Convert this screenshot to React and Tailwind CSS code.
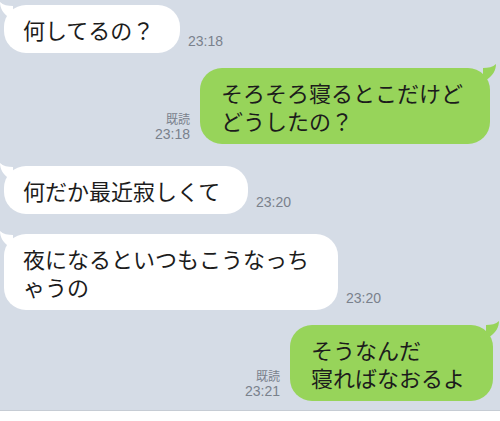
import React from 'react';

const jp = { fontFamily: '"Noto Sans CJK JP", "Noto Sans", sans-serif' };
const num = { fontFamily: '"Liberation Sans", Arial, sans-serif' };

const LeftTail = () => (
  <svg className="absolute -left-[5px] -top-[3px]" width="14" height="20" viewBox="0 0 14 20">
    <path d="M14 4 C9 4 4 3 1 0 C1 6 4 12 12 17 L14 17 Z" fill="#ffffff" />
  </svg>
);

const RightTail = () => (
  <svg className="absolute -right-[7px] -top-[4px]" width="14" height="20" viewBox="0 0 14 20">
    <path d="M0 4 C5 4 10 3 13 0 C13 6 10 12 2 17 L0 17 Z" fill="#97d45a" />
  </svg>
);

const Incoming = ({ lines, time, width, mt }) => (
  <div className={`flex items-end pl-[4px] ${mt}`}>
    <div
      className={`relative bg-white rounded-[22px] pl-[19px] pr-[19px] py-[10px] text-[22px] leading-[28px] text-[#1c1c1c] ${width}`}
      style={jp}
    >
      <LeftTail />
      {lines.map((l, i) => (
        <div key={i} className="whitespace-nowrap">{l}</div>
      ))}
    </div>
    <span className="ml-[8px] mb-[4px] text-[14px] leading-[16px] text-[#7a818c]" style={num}>
      {time}
    </span>
  </div>
);

const Outgoing = ({ lines, time, width, mt, pr }) => (
  <div className={`flex items-end justify-end ${pr} ${mt}`}>
    <div className="mr-[10px] mb-[2px] flex flex-col items-end text-[#7a818c]">
      <span className="text-[12px] leading-[15px]" style={jp}>既読</span>
      <span className="text-[14px] leading-[16px]" style={num}>{time}</span>
    </div>
    <div
      className={`relative bg-[#97d45a] rounded-[22px] pl-[21px] pr-[19px] py-[10px] text-[22px] leading-[28px] text-[#1c1c1c] ${width}`}
      style={jp}
    >
      <RightTail />
      {lines.map((l, i) => (
        <div key={i} className="whitespace-nowrap">{l}</div>
      ))}
    </div>
  </div>
);

export default function App() {
  return (
    <div className="w-[500px] h-[421px] overflow-hidden flex flex-col bg-[#d5dce6]">
      <div className="h-[410px] pt-[5px] flex flex-col">
        <Incoming lines={['何してるの？']} time="23:18" width="w-[176px]" mt="" />
        <Outgoing
          lines={['そろそろ寝るとこだけど', 'どうしたの？']}
          time="23:18"
          width="w-[290px]"
          mt="mt-[15px]"
          pr="pr-[10px]"
        />
        <Incoming lines={['何だか最近寂しくて']} time="23:20" width="w-[244px]" mt="mt-[22px]" />
        <Incoming
          lines={['夜になるといつもこうなっち', 'ゃうの']}
          time="23:20"
          width="w-[334px]"
          mt="mt-[20px]"
        />
        <Outgoing
          lines={['そうなんだ', '寝ればなおるよ']}
          time="23:21"
          width="w-[203px]"
          mt="mt-[15px]"
          pr="pr-[7px]"
        />
      </div>
      <div className="flex-1 bg-white border-t border-[#c6ccd4]" />
    </div>
  );
}
